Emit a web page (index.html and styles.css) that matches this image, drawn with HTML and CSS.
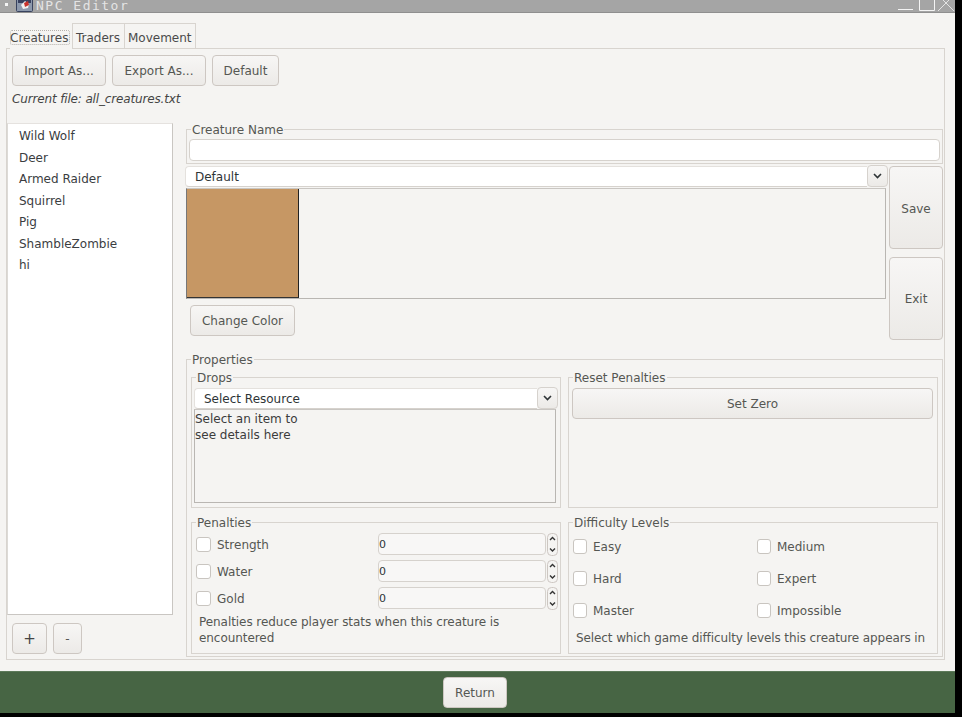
FILE: index.html
```html
<!DOCTYPE html>
<html lang="en">
<head>
  <meta charset="UTF-8">
  <title>NPC Editor</title>
  <link rel="stylesheet" href="styles.css">
</head>
<body>
  <div class="window">
    <header class="titlebar">
      <span class="menu-dot"></span>
      <svg class="app-icon" width="17" height="12" viewBox="0 0 17 12">
        <rect x="0.5" y="-1" width="16" height="12.5" rx="1" fill="#8d99ad" stroke="#39435f"/>
        <rect x="2" y="0" width="13" height="3" fill="#39415f"/>
        <path d="M5 5 L9 1 L13 4 L12 8 L7 9 Z" fill="#f1f1f1"/>
        <path d="M8 3 L12 1 L13 5 L9 7 Z" fill="#c8322c"/>
      </svg>
      <span class="title">NPC Editor</span>
      <svg class="win-controls" width="57" height="12" viewBox="0 0 57 12" fill="none" stroke="#f4f4f4">
        <path d="M1 9.5 H16"/>
        <path d="M22.5 0 V10.5 H37.5 V0"/>
        <path d="M41 11 L53 -1 M57 11 L45 -1" stroke-width="0.8"/>
      </svg>
    </header>

    <main class="content">
      <nav class="tabs">
        <span class="tab tab-active"><span class="focus-rect">Creatures</span></span>
        <span class="tab">Traders</span>
        <span class="tab">Movement</span>
      </nav>

      <section class="pane">
        <div class="toolbar">
          <button class="btn btn-import">Import As...</button>
          <button class="btn btn-export">Export As...</button>
          <button class="btn btn-default">Default</button>
        </div>
        <p class="current-file">Current file: all_creatures.txt</p>

        <div class="pane-body">
          <aside class="left-col">
            <ul class="creature-list">
              <li>Wild Wolf</li>
              <li>Deer</li>
              <li>Armed Raider</li>
              <li>Squirrel</li>
              <li>Pig</li>
              <li>ShambleZombie</li>
              <li>hi</li>
            </ul>
            <div class="list-buttons">
              <button class="btn btn-add">+</button>
              <button class="btn btn-remove">-</button>
            </div>
          </aside>

          <div class="right-col">
            <fieldset class="group name-group">
              <legend>Creature Name</legend>
              <div class="text-input"></div>
            </fieldset>

            <div class="editor">
              <div class="editor-main">
                <div class="combo">
                  <div class="combo-value">Default</div>
                  <span class="combo-arrow">
                    <svg width="9" height="6" viewBox="0 0 9 6"><path d="M1 1 L4.5 4.5 L8 1" fill="none" stroke="#2e3436" stroke-width="1.6"/></svg>
                  </span>
                </div>
                <div class="color-frame"><div class="swatch"></div></div>
                <button class="btn btn-color">Change Color</button>
              </div>
              <div class="editor-side">
                <button class="btn btn-tall">Save</button>
                <button class="btn btn-tall">Exit</button>
              </div>
            </div>

            <fieldset class="group props-group">
              <legend>Properties</legend>
              <div class="props-grid">
                <fieldset class="group drops-group">
                  <legend>Drops</legend>
                  <div class="combo combo-drops">
                    <div class="combo-value">Select Resource</div>
                    <span class="combo-arrow">
                      <svg width="9" height="6" viewBox="0 0 9 6"><path d="M1 1 L4.5 4.5 L8 1" fill="none" stroke="#2e3436" stroke-width="1.6"/></svg>
                    </span>
                  </div>
                  <div class="details">Select an item to<br>see details here</div>
                </fieldset>

                <fieldset class="group reset-group">
                  <legend>Reset Penalties</legend>
                  <button class="btn btn-zero">Set Zero</button>
                </fieldset>

                <fieldset class="group penalties-group">
                  <legend>Penalties</legend>
                  <div class="penalty-row">
                    <label class="check"><span class="box"></span>Strength</label>
                    <div class="spin-value">0</div>
                    <span class="spin-arrows"><svg width="11" height="23" viewBox="0 0 11 23"><use href="#spin"/></svg></span>
                  </div>
                  <div class="penalty-row">
                    <label class="check"><span class="box"></span>Water</label>
                    <div class="spin-value">0</div>
                    <span class="spin-arrows"><svg width="11" height="23" viewBox="0 0 11 23"><use href="#spin"/></svg></span>
                  </div>
                  <div class="penalty-row">
                    <label class="check"><span class="box"></span>Gold</label>
                    <div class="spin-value">0</div>
                    <span class="spin-arrows"><svg width="11" height="23" viewBox="0 0 11 23"><use href="#spin"/></svg></span>
                  </div>
                  <p class="note note-penalties">Penalties reduce player stats when this creature is encountered</p>
                </fieldset>

                <fieldset class="group difficulty-group">
                  <legend>Difficulty Levels</legend>
                  <div class="difficulty-grid">
                    <label class="check"><span class="box"></span>Easy</label>
                    <label class="check"><span class="box"></span>Medium</label>
                    <label class="check"><span class="box"></span>Hard</label>
                    <label class="check"><span class="box"></span>Expert</label>
                    <label class="check"><span class="box"></span>Master</label>
                    <label class="check"><span class="box"></span>Impossible</label>
                  </div>
                  <p class="note note-difficulty">Select which game difficulty levels this creature appears in</p>
                </fieldset>
              </div>
            </fieldset>
          </div>
        </div>
      </section>
    </main>

    <footer class="footer">
      <button class="btn btn-return">Return</button>
    </footer>
  </div>

  <svg width="0" height="0" class="defs">
    <defs>
      <g id="spin">
        <rect x="0.5" y="0.5" width="10" height="22" rx="4" fill="#f5f4f2" stroke="#cdc7c2"/>
        <path d="M3 7 L5.5 4.5 L8 7" fill="none" stroke="#333" stroke-width="1.4"/>
        <path d="M3 15.5 L5.5 18 L8 15.5" fill="none" stroke="#333" stroke-width="1.4"/>
      </g>
    </defs>
  </svg>
</body>
</html>
```

FILE: styles.css
```css
*, *::before, *::after {
  box-sizing: border-box;
}

html, body {
  margin: 0;
  height: 717px;
  overflow: hidden;
  background: #000;
}

body {
  font-family: 'DejaVu Sans', sans-serif;
  font-size: 12px;
  color: #555753;
}

.defs {
  display: block;
}

.window {
  width: 955px;
  height: 713px;
  display: flex;
  flex-direction: column;
  background: #f5f4f2;
}

/* title bar */
.titlebar {
  height: 13px;
  flex: none;
  display: flex;
  align-items: flex-start;
  background: #a5a5a5;
  border-bottom: 1px solid #8f8f8f;
  overflow: hidden;
}

.menu-dot {
  width: 3px;
  height: 3px;
  margin: 3px 8px 0 5px;
  background: #f4f4f4;
}

.app-icon {
  flex: none;
}

.title {
  margin-left: 3px;
  font-family: 'DejaVu Sans Mono', monospace;
  font-size: 13px;
  line-height: 12px;
  letter-spacing: 1.5px;
  color: #e4e4e4;
}

.win-controls {
  margin-left: auto;
  margin-right: 1px;
}

.content {
  flex: 1;
  padding: 10px 10px 11px 6px;
  display: flex;
  flex-direction: column;
}

/* tabs */
.tabs {
  display: flex;
  height: 26px;
  padding-left: 4px;
  margin-bottom: -1px;
  position: relative;
}

.tab {
  height: 26px;
  padding: 7px 3px 0;
  border: 1px solid #d8d4cf;
  border-left-width: 0;
  color: #4a4a4a;
  line-height: 15px;
}

.tab-active {
  width: 62px;
  padding: 7px 0 0;
  border: 0;
  background: #f5f4f2;
  z-index: 1;
}

.focus-rect {
  display: inline-block;
  height: 15px;
  width: 60px;
  line-height: 14px;
  text-indent: -1px;
  white-space: nowrap;
  border: 1px dotted #b5b1ac;
  border-radius: 2px;
}

.tab:nth-child(2) {
  width: 53px;
  border-left-width: 1px;
}

.tab:nth-child(3) {
  width: 71px;
}

.pane {
  flex: 1;
  min-height: 0;
  border: 1px solid #d8d4cf;
  display: flex;
  flex-direction: column;
}

.toolbar {
  display: flex;
  padding: 6px 0 0 5px;
  gap: 6px;
}

/* buttons */
.btn {
  height: 31px;
  padding: 0;
  font: inherit;
  color: #555753;
  border: 1px solid #cdc7c2;
  border-radius: 4px;
  background: linear-gradient(#f7f6f5, #eceae7);
}

.btn-import {
  width: 94px;
}

.btn-export {
  width: 94px;
}

.btn-default {
  width: 67px;
}

.current-file {
  margin: 6px 0 0 5px;
  height: 15px;
  line-height: 15px;
  font-style: italic;
  letter-spacing: -0.15px;
  color: #444;
}

.pane-body {
  margin-top: 15px;
  display: flex;
  flex: 1;
  min-height: 0;
}

.left-col {
  width: 166px;
  flex: none;
}

.creature-list {
  height: 492px;
  margin: 1px 0 0;
  padding: 2px 0 0 11px;
  list-style: none;
  background: #fff;
  border: 1px solid #c9c6c2;
  border-top-color: #e5e2df;
  border-left-color: #dcdad6;
  color: #3a3d3f;
}

.creature-list li {
  height: 21.5px;
  line-height: 21.5px;
}

.list-buttons {
  display: flex;
  gap: 6px;
  margin: 8px 0 0 5px;
}

.btn-add {
  width: 35px;
  font-size: 15px;
  color: #444;
}

.btn-remove {
  width: 29px;
}

.right-col {
  width: 759px;
  margin-left: 12px;
}

/* group boxes, legend sits on the top border */
.group {
  --pad: 2px;
  margin: 0;
  padding: 0;
  padding-left: var(--pad);
  min-width: 0;
  border: 1px solid #d8d4cf;
}

.group legend {
  margin-left: calc(4px - var(--pad));
  padding: 0 1px;
  height: 14px;
  line-height: 16px;
  color: #555753;
}

.name-group {
  margin-left: 1px;
  width: 757px;
  padding-top: 3px;
  padding-right: 2px;
  padding-bottom: 2px;
}

.text-input {
  height: 22px;
  background: #fff;
  border: 1px solid #d6d2cd;
  border-radius: 4px;
}

.editor {
  display: flex;
  margin-top: 1px;
}

.editor-main {
  width: 703px;
  flex: none;
}

.combo {
  display: flex;
  height: 22px;
}

.combo-value {
  flex: 1;
  height: 21px;
  margin-top: 1px;
  padding-left: 9px;
  line-height: 20px;
  color: #2e3436;
  background: #fff;
  border: 1px solid #e4e1dd;
  border-right: 0;
  border-bottom-color: #d6d2cd;
  border-radius: 4px 0 0 4px;
}

.combo-arrow {
  width: 21px;
  display: flex;
  align-items: center;
  justify-content: center;
  border: 1px solid #d6d2cd;
  border-radius: 4px;
  background: linear-gradient(#f7f6f5, #eceae7);
}

.color-frame {
  margin: 1px 2px 0 1px;
  width: 700px;
  height: 111px;
  border: 1px solid #c9c6c2;
  border-left-color: #777;
  border-bottom-color: #b9b6b2;
  border-right-color: #b9b6b2;
}

.swatch {
  width: 112px;
  height: 109px;
  background: #c69764;
  border-right: 1px solid #222;
  border-bottom: 1px solid #333;
}

.btn-color {
  display: block;
  margin: 6px 0 0 5px;
  width: 105px;
}

.editor-side {
  margin: 1px 0 0 1px;
  width: 54px;
  display: flex;
  flex-direction: column;
  gap: 8px;
}

.btn-tall {
  height: 83px;
}

.btn-tall:first-child {
  padding-top: 2px;
}

.props-group {
  --pad: 4px;
  margin: 12px 0 0 1px;
  width: 757px;
  padding-top: 4px;
  padding-right: 4px;
  padding-bottom: 2px;
}

.props-grid {
  display: grid;
  grid-template-columns: 370px 370px;
  grid-template-rows: 138px 139px;
  gap: 7px;
}

.drops-group {
  padding-top: 3px;
  padding-right: 2px;
}

.details {
  width: 362px;
  height: 94px;
  padding: 1px 0;
  line-height: 16px;
  color: #3c3c3c;
  border: 1px solid #b9b6b2;
  border-top-color: #c9c6c2;
}

.reset-group {
  --pad: 3px;
  padding-top: 4px;
  padding-right: 4px;
}

.btn-zero {
  width: 361px;
}

.penalties-group {
  --pad: 4px;
  padding-top: 4px;
  padding-right: 2px;
}

.penalty-row {
  display: grid;
  grid-template-columns: 182px 168px 11px;
  height: 22px;
  margin-bottom: 5px;
  align-items: center;
}

.check {
  display: flex;
  align-items: center;
  gap: 6px;
  padding-top: 2px;
}

.box {
  width: 15px;
  height: 15px;
  flex: none;
  margin-bottom: 2px;
  background: #fff;
  border: 1px solid #c9c5c0;
  border-radius: 3px;
}

.spin-value {
  height: 22px;
  font-size: 11px;
  line-height: 22px;
  color: #2e3436;
  background: #f8f7f6;
  border: 1px solid #d6d2cd;
  border-radius: 4px;
}

.spin-arrows {
  height: 22px;
  margin-left: 1px;
}

.spin-arrows svg {
  display: block;
}

.note {
  margin: 0;
  line-height: 16px;
}

.note-penalties {
  padding: 0 10px 0 3px;
  letter-spacing: -0.06px;
}

.difficulty-group {
  --pad: 4px;
  padding-top: 1px;
  padding-right: 2px;
}

.difficulty-grid {
  display: grid;
  grid-template-columns: 184px 180px;
  grid-auto-rows: 32px;
}

.difficulty-grid .box {
  width: 14px;
}

.note-difficulty {
  margin-top: 4px;
  padding-left: 3px;
  letter-spacing: -0.1px;
  white-space: nowrap;
}

.footer {
  height: 42px;
  flex: none;
  display: flex;
  justify-content: center;
  padding-right: 5px;
  background: #476544;
  border-top: 1px solid #5d7a5a;
}

.btn-return {
  margin-top: 5px;
  width: 64px;
  height: 31px;
}
```
